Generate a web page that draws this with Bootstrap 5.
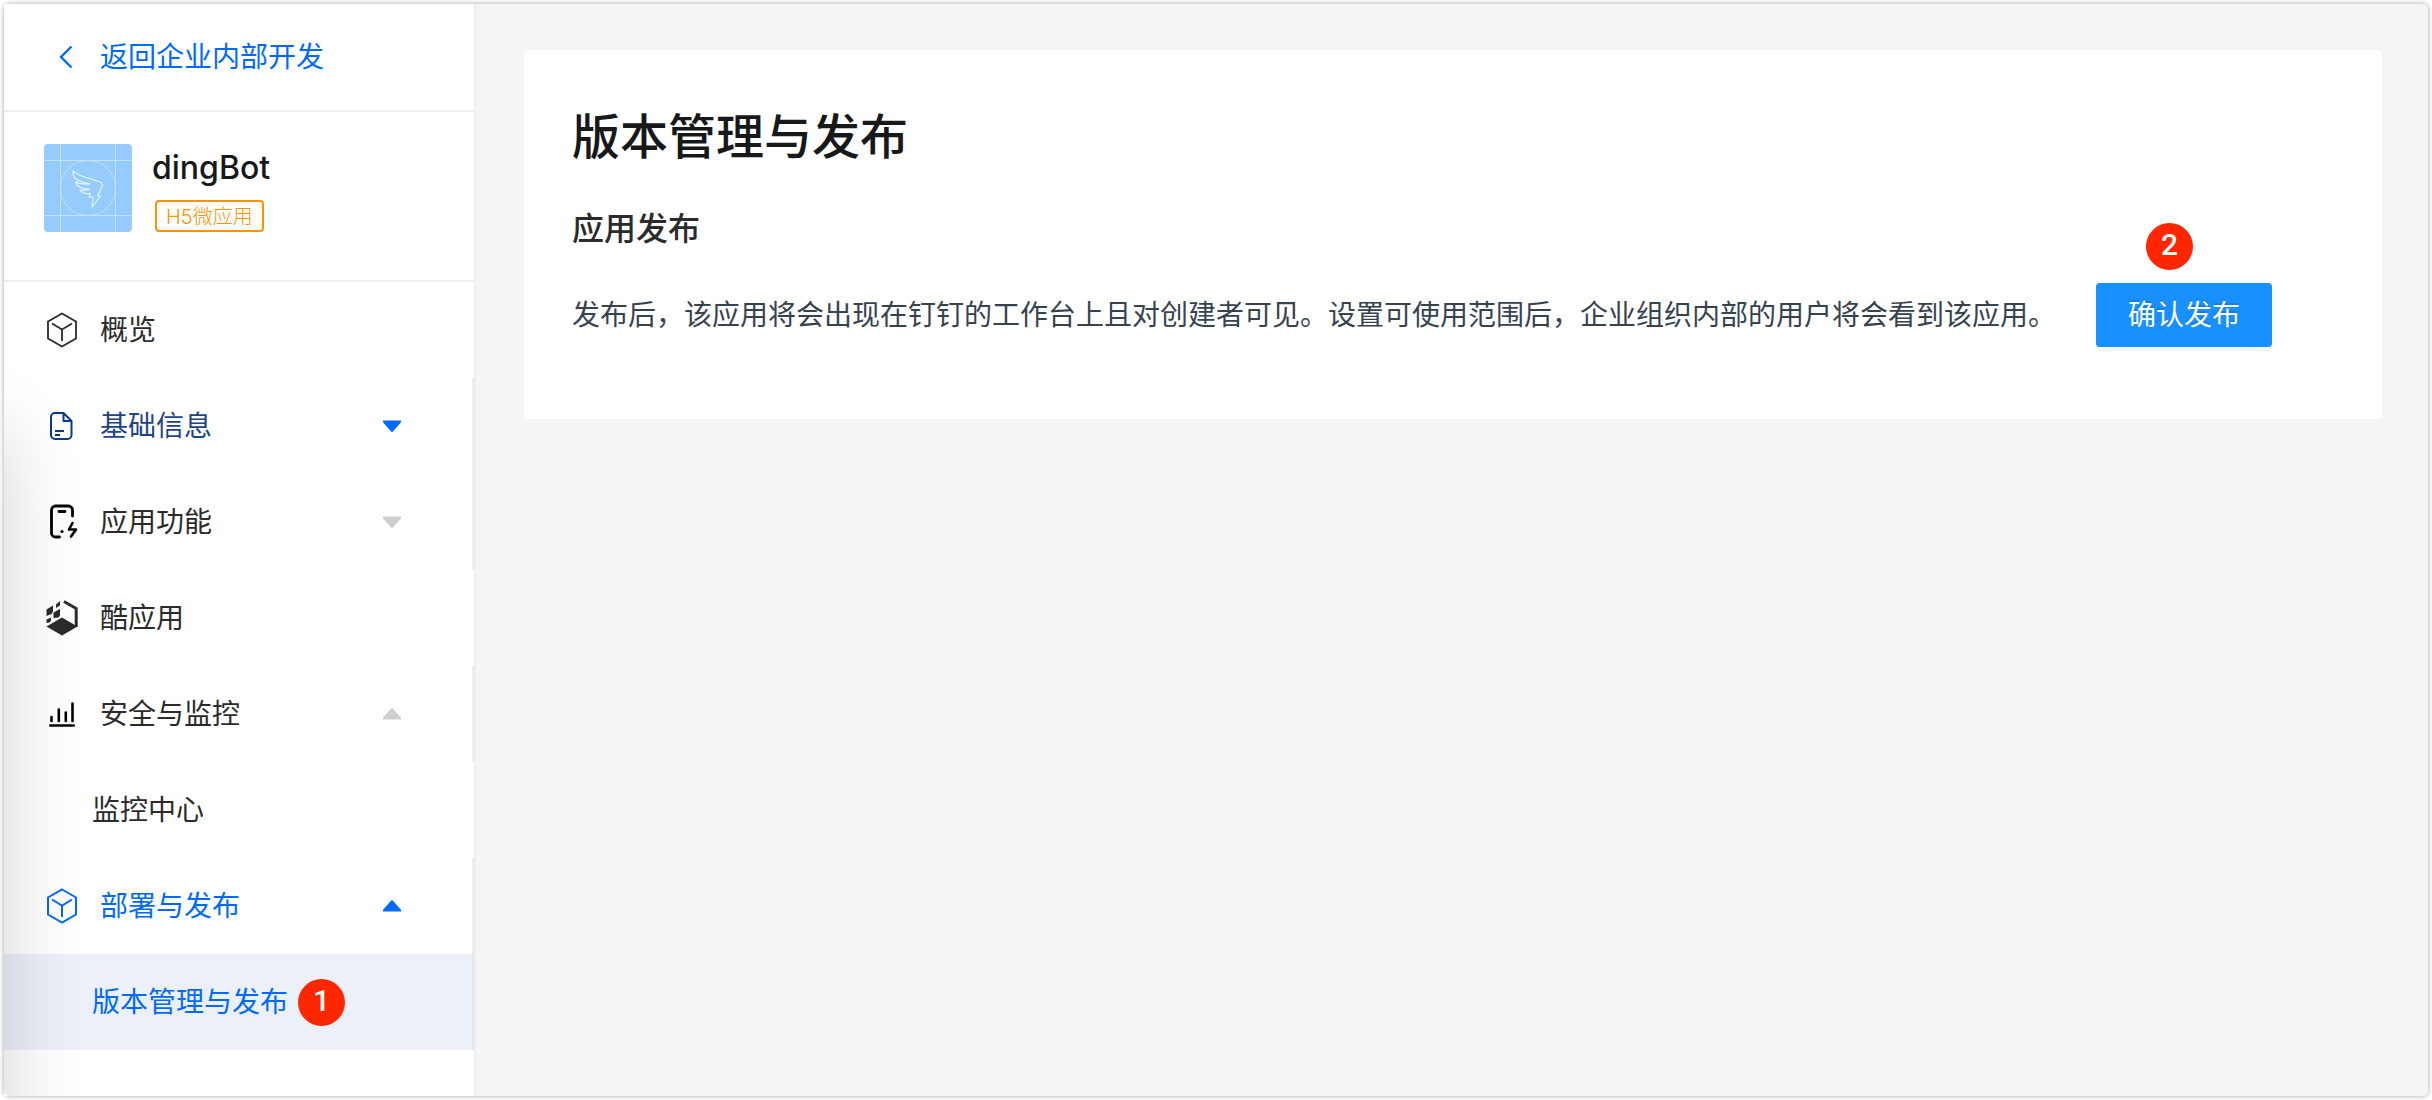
<!DOCTYPE html>
<html lang="zh-CN">
<head>
<meta charset="utf-8">
<meta name="viewport" content="width=device-width, initial-scale=1">
<title>版本管理与发布</title>
<link href="https://cdn.jsdelivr.net/npm/bootstrap@5.3.0/dist/css/bootstrap.min.css" rel="stylesheet">
<style>
  body { font-family: Inter, "Noto Sans CJK SC", sans-serif; font-size: 28px; line-height: 40px; color: #2b2b2b; background: #fff; padding: 4px; }
  a { text-decoration: none; }
  .app-frame { min-height: calc(100vh - 8px); border-radius: 5px; background: #f5f5f5; box-shadow: 0 0 5px rgba(0,0,0,.38); }
  .side-panel { width: 472px; background: #fff; border-right: 2px solid #eee; }
  .back-link { height: 108px; padding: 0 40px; gap: 12px; border-bottom: 2px solid #eee; color: #0069ff; }
  .app-info { height: 170px; padding: 32px 40px; border-bottom: 2px solid #eee; gap: 20px; }
  .app-name { font-size: 32px; font-weight: 500; line-height: 48px; color: #17181a; margin: 0 0 8px; }
  .app-tag { font-size: 20px; font-weight: 300; line-height: 26px; color: #ff9200; border: 2px solid #ff9200; border-radius: 4px; padding: 2px 9px 0; margin-left: 3px; }
  .menu-item { height: 96px; padding: 0 70px 0 40px; gap: 20px; width: 100%; background: none; border: 0; border-right: 2px solid transparent; color: #2b2b2b; text-align: left; }
  .menu-group { border-right-color: #eee; }
  .menu-sub { padding-left: 88px; gap: 10px; }
  .tone-navy { color: #1d4488; }
  .tone-blue { color: #0069ff; }
  .menu-current { background: #ecf0f9; border-right-color: #e2e7f2; }
  .caret-icon { color: #cdcfcf; }
  .caret-blue { color: #0069ff; }
  .step-dot { width: 47px; height: 47px; border-radius: 50%; background: #ff2600; color: #fff; font-family: Roboto, sans-serif; font-size: 30px; font-weight: 500; line-height: 44px; text-align: center; flex: none; }
  .step-over { position: absolute; left: 50px; bottom: 77px; }
  .edge-shade { position: absolute; inset: 0 auto 0 0; width: 80px; overflow: hidden; pointer-events: none; border-radius: 5px; }
  .edge-shade::before { content: ""; position: absolute; left: -200px; width: 200px; top: 430px; bottom: -200px; box-shadow: 0 0 80px rgba(0,0,0,.18); }
  .content-area { padding: 46px 46px 46px 48px; }
  .publish-panel { background: #fff; border-radius: 4px; padding: 55px 48px 72px; }
  .panel-title { font-size: 48px; font-weight: 500; line-height: 64px; color: #17181a; margin: 0 0 36px; }
  .panel-subtitle { font-size: 32px; font-weight: 500; line-height: 48px; margin: 0 0 30px; }
  .panel-text { color: #36434f; }
  .btn-publish { width: 176px; height: 64px; padding: 0; font-size: 28px; line-height: 64px; border: 0; border-radius: 4px; background: #1890ff; color: #fff; box-shadow: 0 4px 0 #f5f5f5; text-shadow: 0 -2px 0 rgba(0,0,0,.12); }
  svg { flex: none; display: block; }
</style>
</head>
<body>
<div class="app-frame d-flex position-relative">
  <aside class="side-panel flex-shrink-0">
    <a class="back-link d-flex align-items-center" href="#">
      <svg width="44" height="36" viewBox="0 0 44 36" fill="none" stroke="currentColor" stroke-width="2.4"><path d="M27.500 7.500 17 18l10.500 10.500"/></svg>
      <span>返回企业内部开发</span>
    </a>
    <div class="app-info d-flex">
      <svg width="88" height="88" viewBox="0 0 88 88" fill="none">
        <rect width="88" height="88" rx="4" fill="#96cbfd"/>
        <g stroke="#c5e2fd" stroke-width="1"><path d="M16.500 0v88M71.500 0v88M0 16.500h88M0 71.500h88"/><circle cx="44" cy="44" r="27.500"/></g>
        <path d="M29 26.500C32 32 45 34 55 37.500c3 1 4 2.500 3 5-1.500 4-3 7-4.500 9.500h3L48 63l1-10h-4l1.500-3.500c-5 .5-9-1-10.500-3.500 3 .6 6 .3 9.500-.8-6 0-12-2-14-7.200 4 2 9 2.500 14.500 2-8-1.500-15-4-16.500-8-.6-2-.6-3.500-.500-5.500z" stroke="#e6f3ff" stroke-width="1.200" stroke-linejoin="round"/>
      </svg>
      <div class="d-flex flex-column align-items-start">
        <h2 class="app-name">dingBot</h2>
        <div class="app-tag">H5微应用</div>
      </div>
    </div>
    <nav>
      <a class="menu-item d-flex align-items-center" href="#">
        <svg width="36" height="36" viewBox="0 0 36 36" fill="none" stroke="currentColor" stroke-width="1.800"><path d="M18 1.500 32 9.500v17l-14 8-14-8v-17zM8 11.500l10 6 10-6M18 17.500V29"/></svg>
        <span>概览</span>
      </a>
      <button type="button" class="menu-item menu-group tone-navy d-flex align-items-center">
        <svg width="36" height="36" viewBox="0 0 36 36" fill="none" stroke="#0a3a8a" stroke-width="2" stroke-linejoin="round"><path d="M19.500 5H11a4 4 0 0 0-4 4v18a4 4 0 0 0 4 4h12.500a4 4 0 0 0 4-4V13zM19.500 5v8h8M11 23h9M11 27h5"/></svg>
        <span>基础信息</span>
        <svg class="caret-icon caret-blue ms-auto" width="20" height="20" viewBox="0 0 20 20" fill="currentColor"><path d="M1 4.500h18v1.800L10.800 15.500a1 1 0 0 1-1.600 0L1 6.300z"/></svg>
      </button>
      <button type="button" class="menu-item menu-group d-flex align-items-center">
        <svg width="36" height="36" viewBox="0 0 36 36" fill="none" stroke="#000" stroke-width="2.800" stroke-linecap="round" stroke-linejoin="round"><path d="M28.500 12V6a4 4 0 0 0-4-4h-13a4 4 0 0 0-4 4v23a4 4 0 0 0 4 4h4M15 7.500h6" /><path d="M28.500 19 25 25.500h7L27 32.500" stroke-width="2.600"/><circle cx="18" cy="27.500" r="1.600" fill="#000" stroke="none"/></svg>
        <span>应用功能</span>
        <svg class="caret-icon ms-auto" width="20" height="20" viewBox="0 0 20 20" fill="currentColor"><path d="M1 4.500h18v1.800L10.800 15.500a1 1 0 0 1-1.600 0L1 6.300z"/></svg>
      </button>
      <a class="menu-item d-flex align-items-center" href="#">
        <svg width="36" height="36" viewBox="0 0 36 36" fill="currentColor"><path d="M2.500 26.500 18 17.500l15.500 9L18 35.500z"/><path d="M20 1.500 32.200 8.500V27" fill="none" stroke="currentColor" stroke-width="3" stroke-linejoin="round"/><path d="M2.500 9.500 9 5.500v6l-1.500 2.500-5 2zM9.500 12.500 16 9v6.500l-1.500 2-5 .5zM12 4.500 16 1v4.500l-4 2.500zM2.500 19.500l4.500-2v3l-1.500 2-3 .5z"/></svg>
        <span>酷应用</span>
      </a>
      <button type="button" class="menu-item menu-group d-flex align-items-center">
        <svg width="36" height="36" viewBox="0 0 36 36" fill="none" stroke="#000" stroke-width="2.600" stroke-linecap="round"><path d="M6.300 29.500h23.400M7.500 25v-4M14.800 25V13.500M21.800 25v-8.500M28.500 25V7.500"/></svg>
        <span>安全与监控</span>
        <svg class="caret-icon ms-auto" width="20" height="20" viewBox="0 0 20 20" fill="currentColor"><path d="M1 15.500h18v-1.800L10.800 4.500a1 1 0 0 0-1.600 0L1 13.700z"/></svg>
      </button>
      <a class="menu-item menu-sub d-flex align-items-center" href="#">监控中心</a>
      <button type="button" class="menu-item menu-group tone-blue d-flex align-items-center">
        <svg width="36" height="36" viewBox="0 0 36 36" fill="none" stroke="currentColor" stroke-width="2"><path d="M18 1.500 32 9.500v17l-14 8-14-8v-17zM8 11.500l10 6 10-6M18 17.500V29"/></svg>
        <span>部署与发布</span>
        <svg class="caret-icon caret-blue ms-auto" width="20" height="20" viewBox="0 0 20 20" fill="currentColor"><path d="M1 15.500h18v-1.800L10.800 4.500a1 1 0 0 0-1.600 0L1 13.700z"/></svg>
      </button>
      <a class="menu-item menu-sub menu-current tone-blue d-flex align-items-center" href="#" aria-current="page">
        <span>版本管理与发布</span>
        <span class="step-dot">1</span>
      </a>
    </nav>
  </aside>
  <main class="content-area flex-grow-1">
    <section class="publish-panel">
      <h1 class="panel-title">版本管理与发布</h1>
      <h2 class="panel-subtitle">应用发布</h2>
      <div class="d-flex align-items-center">
        <p class="panel-text mb-0">发布后，该应用将会出现在钉钉的工作台上且对创建者可见。设置可使用范围后，企业组织内部的用户将会看到该应用。</p>
        <div class="position-relative flex-shrink-0 ps-4 ms-3">
          <button type="button" class="btn btn-primary btn-publish d-block">确认发布</button>
          <span class="step-dot step-over ms-4">2</span>
        </div>
      </div>
    </section>
  </main>
  <div class="edge-shade"></div>
</div>
<script src="https://cdn.jsdelivr.net/npm/bootstrap@5.3.0/dist/js/bootstrap.bundle.min.js"></script>
</body>
</html>
